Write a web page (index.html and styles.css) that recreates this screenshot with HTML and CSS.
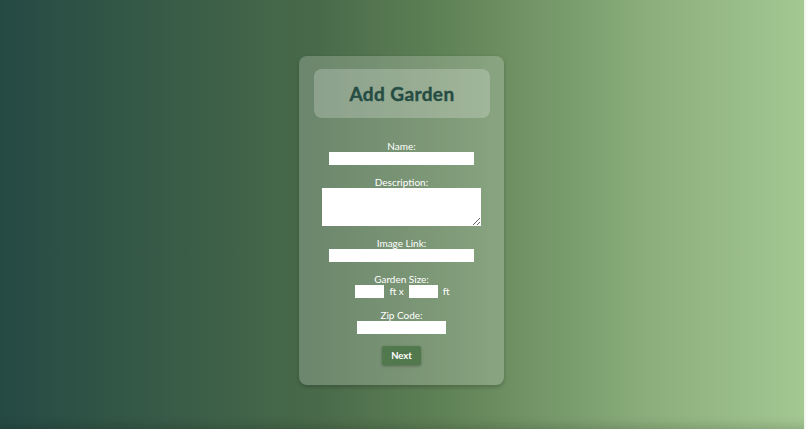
FILE: index.html
```
<!DOCTYPE html>
<html lang="en">
<head>
<meta charset="utf-8">
<title>Add Garden</title>
<link rel="stylesheet" href="styles.css">
</head>
<body>
<main class="page">
  <section class="card">
    <header class="card-header">
      <h1 class="title">Add Garden</h1>
    </header>
    <form class="form">
      <div class="field">
        <label class="label" for="name">Name:</label>
        <input class="input input-wide" id="name" type="text">
      </div>
      <div class="field">
        <label class="label" for="desc">Description:</label>
        <textarea class="textarea" id="desc"></textarea>
      </div>
      <div class="field">
        <label class="label" for="img">Image Link:</label>
        <input class="input input-wide" id="img" type="text">
      </div>
      <div class="field">
        <label class="label" for="w">Garden Size:</label>
        <div class="size-row">
          <input class="input input-small" id="w" type="text">
          <span class="unit">ft x</span>
          <input class="input input-small" id="h" type="text">
          <span class="unit">ft</span>
        </div>
      </div>
      <div class="field">
        <label class="label" for="zip">Zip Code:</label>
        <input class="input input-zip" id="zip" type="text">
      </div>
      <button class="next" type="button">Next</button>
    </form>
  </section>
</main>
</body>
</html>
```
FILE: styles.css
```
html, body {
  margin: 0;
  padding: 0;
  height: 100%;
}
body {
  background: #f3f6f1;
  font-family: "Lato", "Noto Sans", sans-serif;
}
.page {
  width: calc(100% - 2px);
  height: 100%;
  background: linear-gradient(to right, #254a44 0%, #4a6b4a 40%, #5f8156 55%, #8aad7b 80%, #a4c892 100%);
  box-shadow: inset 0 -12px 12px -10px rgba(0, 0, 0, 0.18);
  display: flex;
  flex-direction: column;
  align-items: center;
  padding-top: 56px;
  box-sizing: border-box;
}
.card {
  width: 205px;
  height: 329px;
  margin-right: 1px;
  box-sizing: border-box;
  padding: 13px 14px 0 14px;
  background: rgba(255, 255, 255, 0.2);
  border-radius: 8px;
  box-shadow: 0 2px 4px rgba(0, 0, 0, 0.22);
}
.card-header {
  height: 49px;
  margin-left: 1px;
  background: rgba(255, 255, 255, 0.22);
  border-radius: 8px;
  display: flex;
  align-items: center;
  justify-content: center;
}
.title {
  margin: 0;
  font-size: 19px;
  font-weight: 700;
  color: #264d43;
  letter-spacing: 0.4px;
  -webkit-text-stroke: 0.4px #264d43;
}
.form {
  display: flex;
  flex-direction: column;
  align-items: center;
  margin-top: 22px;
}
.field {
  display: flex;
  flex-direction: column;
  align-items: center;
  margin-bottom: 11px;
}
.label {
  display: block;
  color: #ffffff;
  font-size: 10px;
  line-height: 12px;
  height: 12px;
}
.input {
  display: block;
  height: 13px;
  border: none;
  padding: 0;
  margin: 0;
  background: #ffffff;
  box-sizing: border-box;
}
.input-wide { width: 145px; }
.input-small { width: 29px; }
.input-zip { width: 89px; }
.textarea {
  display: block;
  width: 159px;
  height: 38px;
  border: none;
  padding: 0;
  margin: 0;
  background: #ffffff;
  box-sizing: border-box;
}
.size-row {
  display: flex;
  align-items: center;
  gap: 5px;
  margin-left: 2px;
}
.unit {
  color: #ffffff;
  font-size: 10px;
  line-height: 13px;
}
.next {
  margin-top: 1px;
  width: 39px;
  height: 19px;
  border: none;
  border-radius: 2px;
  background: #52784e;
  color: #ffffff;
  font-family: "Lato", "Noto Sans", sans-serif;
  font-size: 9.5px;
  font-weight: 700;
  padding: 0;
  box-shadow: 0 1px 3px rgba(0, 0, 0, 0.3);
}
```
